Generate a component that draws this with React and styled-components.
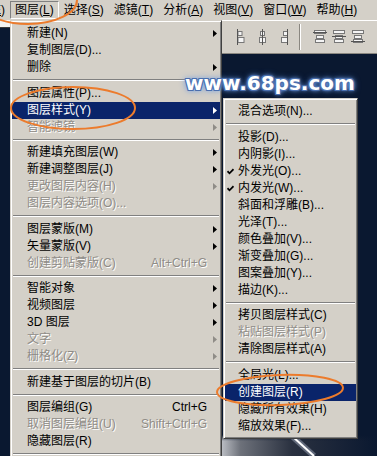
import React from "react";
import styled, { createGlobalStyle, css } from "styled-components";

const GlobalStyle = createGlobalStyle`
  html, body { margin: 0; padding: 0; background: #0a1830; }
  #root { width: 377px; height: 456px; }
`;

const Screen = styled.div`
  position: relative;
  width: 377px;
  height: 456px;
  overflow: hidden;
  background: #0a1830;
  display: flex;
  flex-direction: column;
  font-family: "Liberation Sans", "Noto Sans CJK SC", sans-serif;
  font-size: 12px;
  color: #000;
`;

const MenuBar = styled.div`
  height: 20px;
  flex: none;
  background: #d4d0c8;
  display: flex;
  overflow: hidden;
`;

const MenuTrack = styled.div`
  display: flex;
  margin-left: -40px;
`;

const BarItem = styled.div`
  display: flex;
  align-items: center;
  padding: 0 4px;
  margin: 1px 0;
  white-space: nowrap;
  line-height: 14px;
  border: 1px solid transparent;
  ${(p) =>
    p.$pressed &&
    css`
      border-color: #808080 #ffffff #ffffff #808080;
    `}
`;

const Acc = styled.span`
  text-decoration: underline;
  text-underline-offset: 1px;
`;

const Workspace = styled.div`
  flex: 1;
  min-height: 0;
  display: grid;
  grid-template-columns: 222px 1fr;
`;

const LeftCol = styled.div`
  display: flex;
  flex-direction: column;
`;

const FieldStub = styled.div`
  width: 10px;
  height: 7px;
  background: #f2f2f2;
  border-bottom: 1px solid #3a3a3a;
`;

const RightCol = styled.div`
  display: flex;
  flex-direction: column;
`;

const OptionsBar = styled.div`
  height: 34px;
  flex: none;
  box-sizing: border-box;
  background: #d4d0c8;
  border-top: 1px solid #ffffff;
  border-bottom: 1px solid #8a8780;
  display: flex;
  align-items: center;
  padding-left: 15px;
`;

const IconGroup = styled.div`
  display: flex;
  align-items: center;
  gap: ${(p) => p.$gap}px;
`;

const BarDivider = styled.div`
  width: 1px;
  height: 26px;
  background: #8a8780;
  border-right: 1px solid #ffffff;
  margin: 0 12px 0 11px;
`;

const Canvas = styled.div`
  flex: 1;
  display: flex;
  flex-direction: column;
  justify-content: flex-end;
`;

const Glow = styled.svg`
  display: block;
  width: 155px;
  height: 21px;
`;

const Menu = styled.div`
  position: absolute;
  left: ${(p) => p.$left}px;
  top: ${(p) => p.$top}px;
  width: ${(p) => p.$width}px;
  box-sizing: border-box;
  background: #d4d0c8;
  border: 1px solid;
  border-color: #d4d0c8 #404040 #404040 #d4d0c8;
  box-shadow: inset 1px 1px 0 #ffffff, inset -1px -1px 0 #808080;
  padding: 4px 1px 3px 1px;
`;

const Row = styled.div`
  height: 17px;
  display: flex;
  align-items: center;
  white-space: nowrap;
  padding-right: 3px;
  line-height: 17px;
  color: ${(p) => (p.$active ? "#ffffff" : p.$disabled ? "#8f8c87" : "#000000")};
  background: ${(p) => (p.$active ? "#0a246a" : "transparent")};
  text-shadow: ${(p) => (p.$disabled && !p.$active ? "1px 1px 0 #ffffff" : "none")};
`;

const Gutter = styled.span`
  width: ${(p) => p.$w}px;
  flex: none;
  display: flex;
  align-items: center;
  padding-left: 2px;
  box-sizing: border-box;
`;

const Label = styled.span`
  flex: 1;
`;

const Shortcut = styled.span``;

const ArrowSlot = styled.span`
  width: 10px;
  flex: none;
  display: flex;
  justify-content: flex-end;
  align-items: center;
`;

const Sep = styled.div`
  height: 8.5px;
  display: flex;
  align-items: center;
  padding: 0 1px;
`;

const SepLine = styled.div`
  flex: 1;
  height: 0;
  border-top: 1px solid #808080;
  border-bottom: 1px solid #ffffff;
`;

const Watermark = styled.div`
  position: absolute;
  left: 185px;
  top: 72px;
  font-family: "DejaVu Sans", sans-serif;
  font-weight: bold;
  font-size: 20px;
  line-height: 22px;
  color: #ffffff;
  white-space: nowrap;
  text-shadow: -1px -1px 0 #4a6fae, 1px -1px 0 #4a6fae, -1px 1px 0 #4a6fae,
    1px 1px 0 #4a6fae, 0 0 4px #8ab8ff, 0 0 7px #4c7fd0;
`;

const Annotations = styled.svg`
  position: absolute;
  left: 0;
  top: 0;
  width: 377px;
  height: 456px;
  pointer-events: none;
`;

const mainItems = [
  { l: "新建", k: "N", arrow: true },
  { l: "复制图层", k: "D", dots: true },
  { l: "删除", arrow: true },
  "sep",
  { l: "图层属性", k: "P", dots: true },
  { l: "图层样式", k: "Y", arrow: true, active: true },
  { l: "智能滤镜", arrow: true, disabled: true },
  "sep",
  { l: "新建填充图层", k: "W", arrow: true },
  { l: "新建调整图层", k: "J", arrow: true },
  { l: "更改图层内容", k: "H", arrow: true, disabled: true },
  { l: "图层内容选项", k: "O", dots: true, disabled: true },
  "sep",
  { l: "图层蒙版", k: "M", arrow: true },
  { l: "矢量蒙版", k: "V", arrow: true },
  { l: "创建剪贴蒙版", k: "C", sc: "Alt+Ctrl+G", disabled: true },
  "sep",
  { l: "智能对象", arrow: true },
  { l: "视频图层", arrow: true },
  { l: "3D 图层", arrow: true },
  { l: "文字", arrow: true, disabled: true },
  { l: "栅格化", k: "Z", arrow: true, disabled: true },
  "sep",
  { l: "新建基于图层的切片", k: "B" },
  "sep",
  { l: "图层编组", k: "G", sc: "Ctrl+G" },
  { l: "取消图层编组", k: "U", sc: "Shift+Ctrl+G", disabled: true },
  { l: "隐藏图层", k: "R" },
  "sep",
];

const styleItems = [
  { l: "混合选项", k: "N", dots: true },
  "sep",
  { l: "投影", k: "D", dots: true },
  { l: "内阴影", k: "I", dots: true },
  { l: "外发光", k: "O", dots: true, check: true },
  { l: "内发光", k: "W", dots: true, check: true },
  { l: "斜面和浮雕", k: "B", dots: true },
  { l: "光泽", k: "T", dots: true },
  { l: "颜色叠加", k: "V", dots: true },
  { l: "渐变叠加", k: "G", dots: true },
  { l: "图案叠加", k: "Y", dots: true },
  { l: "描边", k: "K", dots: true },
  "sep",
  { l: "拷贝图层样式", k: "C" },
  { l: "粘贴图层样式", k: "P", disabled: true },
  { l: "清除图层样式", k: "A" },
  "sep",
  { l: "全局光", k: "L", dots: true },
  { l: "创建图层", k: "R", active: true },
  { l: "隐藏所有效果", k: "H" },
  { l: "缩放效果", k: "F", dots: true },
];

const Arrow = () => (
  <svg width="4" height="7" viewBox="0 0 4 7">
    <polygon points="0,0 4,3.5 0,7" fill="currentColor" />
  </svg>
);

const Check = () => (
  <svg width="7" height="7" viewBox="0 0 7 7">
    <polyline points="0.5,3.2 2.5,5.3 6.5,1.2" fill="none" stroke="currentColor" strokeWidth="1.7" />
  </svg>
);

function MenuList({ items, gutter, showArrows }) {
  return items.map((it, i) => {
    if (it === "sep")
      return (
        <Sep key={i}>
          <SepLine />
        </Sep>
      );
    const text = `${it.l}${it.k ? `(${it.k})` : ""}${it.dots ? "..." : ""}`;
    return (
      <Row key={i} $active={it.active} $disabled={it.disabled}>
        <Gutter $w={gutter}>{it.check ? <Check /> : null}</Gutter>
        <Label>{text}</Label>
        {it.sc ? <Shortcut>{it.sc}</Shortcut> : null}
        {showArrows ? <ArrowSlot>{it.arrow ? <Arrow /> : null}</ArrowSlot> : null}
      </Row>
    );
  });
}

const bar = [
  ["编辑", "E"],
  ["图层", "L", true],
  ["选择", "S"],
  ["滤镜", "T"],
  ["分析", "A"],
  ["视图", "V"],
  ["窗口", "W"],
  ["帮助", "H"],
];

const AlignV = ({ pos }) => {
  const x = pos === "l" ? 0.5 : pos === "c" ? 5.5 : 10.5;
  const bx1 = pos === "l" ? 1 : pos === "c" ? 3.5 : 6.5;
  const bx2 = pos === "l" ? 1 : pos === "c" ? 2.5 : 4.5;
  return (
    <svg width="11" height="16" viewBox="0 0 11 16">
      <rect x={bx1} y="2.5" width="4" height="4" fill="#f4f4f4" stroke="#777" />
      <rect x={bx2} y="8.5" width="6" height="5" fill="#f4f4f4" stroke="#777" />
      <line x1={x} y1="0" x2={x} y2="16" stroke="#555" />
    </svg>
  );
};

const AlignH = ({ pos }) => {
  const y = pos === "t" ? 3.5 : pos === "m" ? 7.5 : 12.5;
  return (
    <svg width="14" height="16" viewBox="0 0 14 16">
      <rect x="1.5" y="1.5" width="11" height="3" fill="#f4f4f4" stroke="#777" />
      <rect x="3.5" y="6.5" width="7" height="3" fill="#f4f4f4" stroke="#777" />
      <rect x="2.5" y="10.5" width="9" height="3" fill="#f4f4f4" stroke="#777" />
      <line x1="0" y1={y} x2="14" y2={y} stroke="#555" />
    </svg>
  );
};

export default function App() {
  return (
    <>
      <GlobalStyle />
      <Screen>
        <MenuBar>
          <MenuTrack>
            {bar.map(([t, k, pressed]) => (
              <BarItem key={t} $pressed={pressed}>
                {t}(<Acc>{k}</Acc>)
              </BarItem>
            ))}
          </MenuTrack>
        </MenuBar>
        <Workspace>
          <LeftCol>
            <FieldStub />
          </LeftCol>
          <RightCol>
            <OptionsBar>
              <IconGroup $gap={9}>
                <AlignV pos="l" />
                <AlignV pos="c" />
                <AlignV pos="r" />
              </IconGroup>
              <BarDivider />
              <IconGroup $gap={5}>
                <AlignH pos="t" />
                <AlignH pos="m" />
                <AlignH pos="b" />
              </IconGroup>
            </OptionsBar>
            <Canvas>
              <Glow viewBox="0 0 155 21">
                <defs>
                  <linearGradient id="fade" x1="0" y1="0" x2="1" y2="0">
                    <stop offset="0" stopColor="#b9bcc2" />
                    <stop offset="0.12" stopColor="#6d717a" />
                    <stop offset="0.45" stopColor="#2a3140" />
                    <stop offset="1" stopColor="#0a1830" />
                  </linearGradient>
                  <linearGradient id="vfade" x1="0" y1="0" x2="0" y2="1">
                    <stop offset="0" stopColor="#0a1830" stopOpacity="1" />
                    <stop offset="1" stopColor="#0a1830" stopOpacity="0" />
                  </linearGradient>
                </defs>
                <rect x="0" y="0" width="155" height="21" fill="url(#fade)" />
                <rect x="0" y="0" width="155" height="6" fill="url(#vfade)" />
                <line x1="70" y1="1" x2="92" y2="21" stroke="#cfd8ea" strokeOpacity="0.35" strokeWidth="6" />
                <line x1="70" y1="1" x2="92" y2="21" stroke="#ffffff" strokeWidth="2" />
              </Glow>
            </Canvas>
          </RightCol>
        </Workspace>

        <Menu $left={10} $top={20} $width={212}>
          <MenuList items={mainItems} gutter={15} showArrows />
        </Menu>

        <Menu $left={223} $top={98} $width={135}>
          <MenuList items={styleItems} gutter={13} />
        </Menu>

        <Watermark>www.68ps.com</Watermark>

        <Annotations viewBox="0 0 377 456">
          <g fill="none" stroke="#ec7b2c" strokeWidth="2">
            <ellipse cx="28" cy="0" rx="49" ry="24" />
            <ellipse cx="73" cy="108" rx="62" ry="21" />
            <ellipse cx="280" cy="390" rx="63" ry="15" transform="rotate(-2 280 390)" />
          </g>
        </Annotations>
      </Screen>
    </>
  );
}
